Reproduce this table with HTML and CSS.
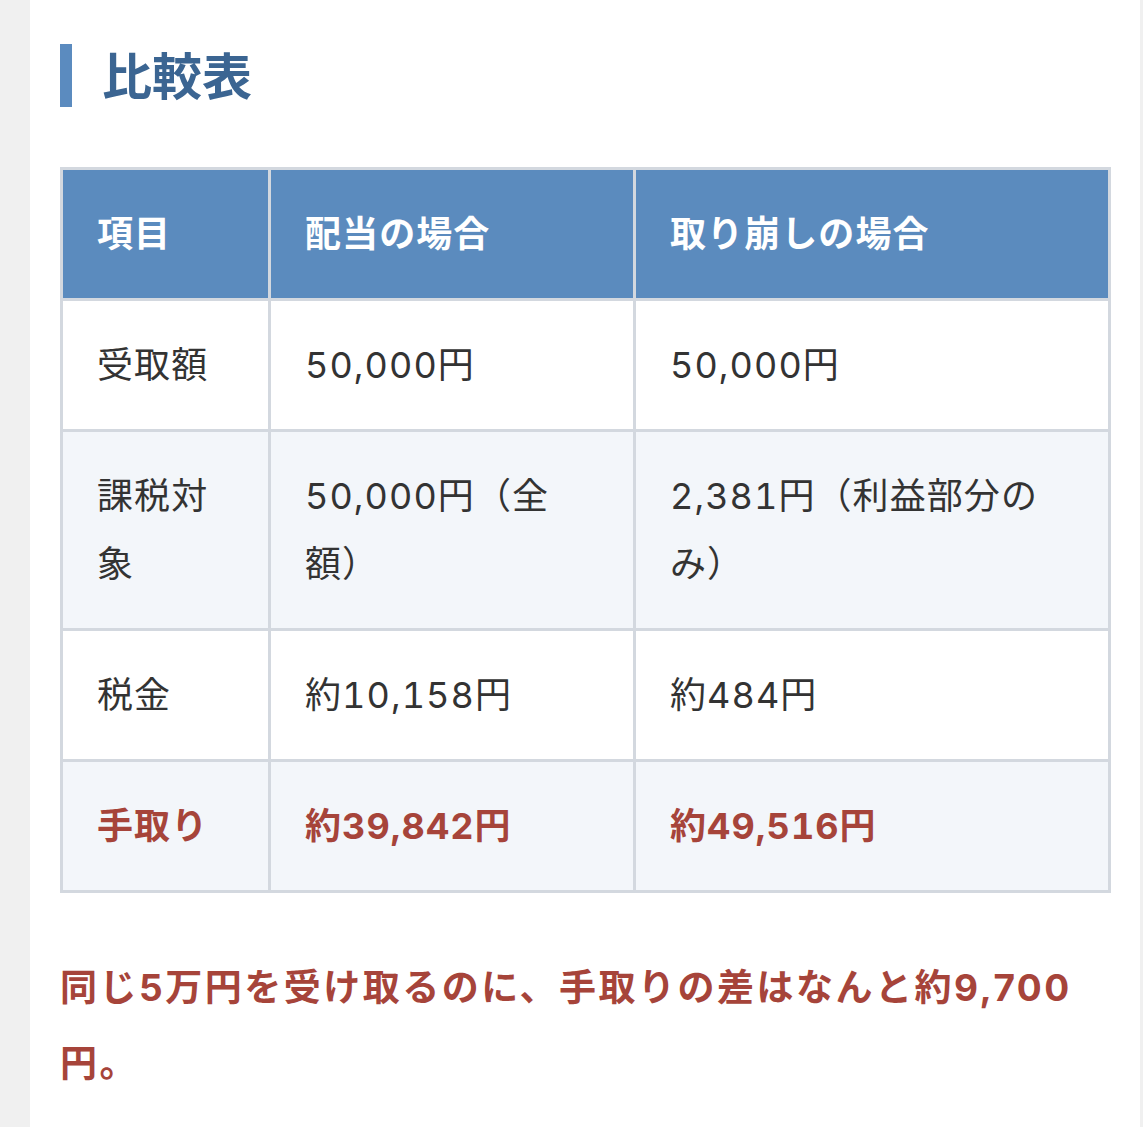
FILE: index.html
```html
<!DOCTYPE html>
<html lang="ja">
<head>
<meta charset="utf-8">
<link rel="stylesheet" href="styles.css">
</head>
<body>
<main class="page">
  <h2 class="heading">比較表</h2>
  <table class="compare">
    <colgroup>
      <col class="c1"><col class="c2"><col class="c3">
    </colgroup>
    <thead>
      <tr><th>項目</th><th>配当の場合</th><th>取り崩しの場合</th></tr>
    </thead>
    <tbody>
      <tr><td>受取額</td><td>50,000円</td><td>50,000円</td></tr>
      <tr class="alt"><td>課税対象</td><td>50,000円（全額）</td><td>2,381円（利益部分のみ）</td></tr>
      <tr><td>税金</td><td>約10,158円</td><td>約484円</td></tr>
      <tr class="alt total"><td>手取り</td><td>約39,842円</td><td>約49,516円</td></tr>
    </tbody>
  </table>
  <p class="note">同じ5万円を受け取るのに、手取りの差はなんと約9,700円。</p>
</main>
</body>
</html>
```

FILE: styles.css
```css
html, body {
  margin: 0;
  padding: 0;
}
body {
  background: #f0f0f0;
  font-family: "Inter", "Noto Sans CJK JP", sans-serif;
  color: #333333;
}
.page {
  margin-left: 30px;
  width: 1110px;
  min-height: 1127px;
  box-sizing: border-box;
  background: #ffffff;
  padding: 44px 30px 0 30px;
}
.heading {
  margin: 0 0 60px 0;
  box-sizing: border-box;
  border-left: 12px solid #5b8bbf;
  padding: 0 0 6px 30px;
  height: 63px;
  display: flex;
  align-items: center;
  font-family: "Noto Sans CJK JP", sans-serif;
  font-size: 50px;
  font-weight: 700;
  color: #3b6592;
  line-height: 1;
}
.compare {
  width: 1048px;
  border-collapse: collapse;
  table-layout: fixed;
  border: 3px solid #d3d8df;
}
.c1 { width: 208px; }
.c2 { width: 365px; }
.c3 { width: 475px; }
.compare th,
.compare td {
  border: 3px solid #d3d8df;
  padding: 30px 42px 30px 34px;
  font-size: 36px;
  line-height: 68px;
  text-align: left;
  vertical-align: middle;
  letter-spacing: 0.03em;
  font-variant-numeric: tabular-nums;
}
.compare th {
  background: #5b8bbe;
  color: #ffffff;
  font-weight: 700;
}
.compare td {
  background: #ffffff;
  color: #333333;
  font-weight: 400;
}
.compare tr.alt td {
  background: #f3f6fa;
}
.compare tr.total td {
  color: #a6443a;
  font-weight: 700;
}
.note {
  margin: 57px 0 0 0;
  font-size: 37px;
  line-height: 76px;
  font-weight: 700;
  color: #a6443a;
  letter-spacing: 2.5px;
}
```
